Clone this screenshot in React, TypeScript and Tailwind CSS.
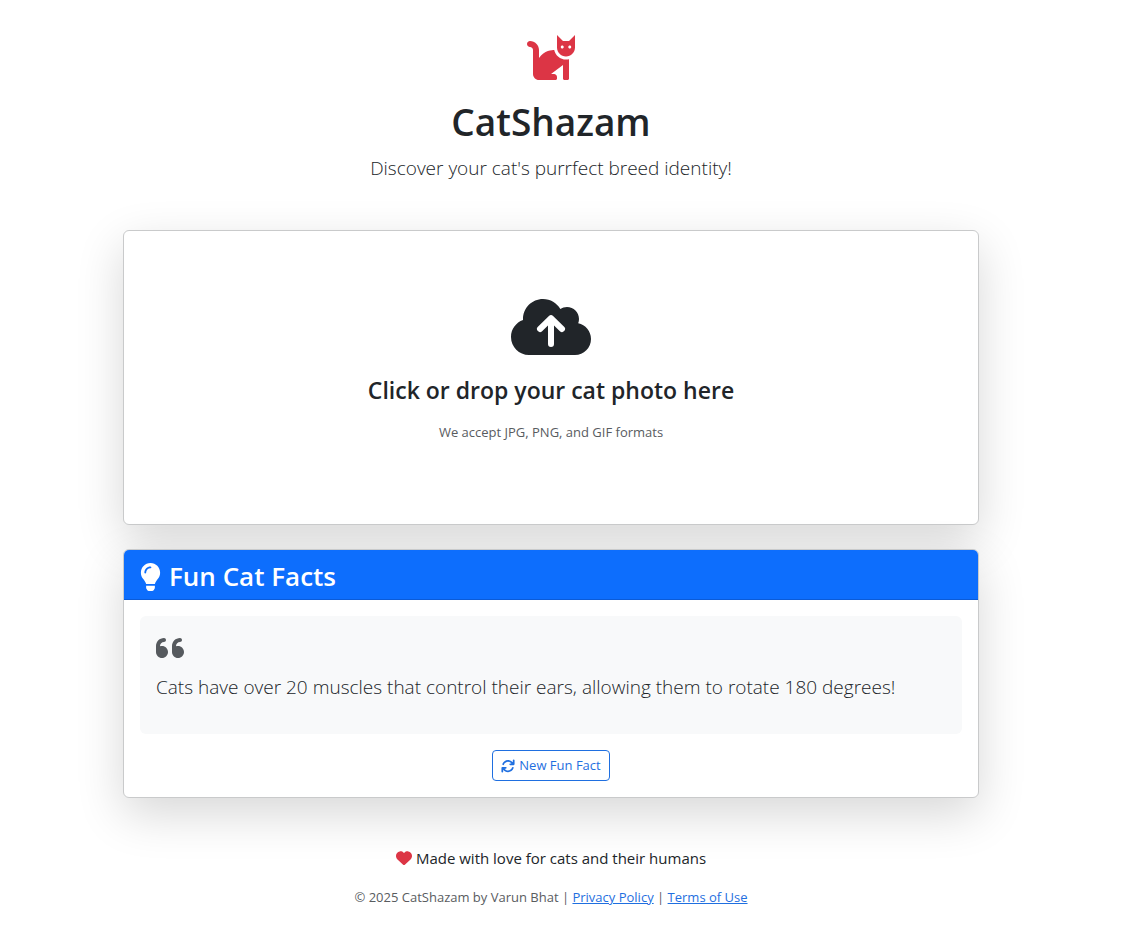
import { useRef, useState } from "react";
import { FaCat } from "react-icons/fa";
import { FaHeart } from "react-icons/fa6";

const facts = [
  "Cats have over 20 muscles that control their ears, allowing them to rotate 180 degrees!",
];

const cardClass =
  "w-full rounded-md border border-[#c9cacb] bg-white shadow-[0_16px_48px_rgba(0,0,0,0.16)]";

function CloudUploadIcon() {
  return (
    <svg viewBox="0 0 640 512" className="h-16 w-20" aria-hidden="true">
      <path
        fill="currentColor"
        d="M144 480C64.5 480 0 415.5 0 336c0-62.8 40.2-116.2 96.2-135.9C96.1 197.4 96 194.7 96 192c0-88.4 71.6-160 160-160c59.3 0 111 32.2 138.7 80.2C409.9 102 428.3 96 448 96c53 0 96 43 96 96c0 12.2-2.3 23.8-6.4 34.6C596 238.4 640 290.1 640 352c0 70.7-57.3 128-128 128H144z"
      />
      <path
        fill="none"
        stroke="#fff"
        strokeWidth="48"
        strokeLinecap="round"
        strokeLinejoin="round"
        d="M232 272l88-86 88 86M320 190v202"
      />
    </svg>
  );
}

function BulbIcon() {
  return (
    <svg viewBox="0 0 384 512" className="h-7 w-[21px]" fill="currentColor" aria-hidden="true">
      <path d="M112.1 454.3c0 6.3 1.8 12.4 5.3 17.7l17.1 25.7c5.3 7.9 17.2 14.3 26.7 14.3h61.6c9.4 0 21.4-6.4 26.6-14.3l17.1-25.7c2.9-4.4 5.3-12.4 5.3-17.7L272 416H112l.1 38.3zM191.4 0C89.4.3 16 83 16 176c0 44.4 16.4 84.8 43.6 115.8c16.5 18.8 42.3 58.2 52.2 91.4c0 .3.1.5.1.8h160.2c0-.3.1-.5.1-.8c9.9-33.2 35.7-72.6 52.2-91.4C351.6 260.8 368 220.4 368 176C368 78.6 288.9-.3 191.4 0zM192 96c-44.1 0-80 35.9-80 80c0 8.8-7.2 16-16 16s-16-7.2-16-16c0-61.8 50.3-112 112-112c8.8 0 16 7.2 16 16s-7.2 16-16 16z" />
    </svg>
  );
}

function QuoteIcon() {
  return (
    <svg
      viewBox="0 0 448 512"
      className="h-8 w-7 text-[#565a5e]"
      fill="currentColor"
      aria-hidden="true"
    >
      <path d="M96 224c-11.3 0-22 2.3-32 5.9V224c0-35.3 28.7-64 64-64c17.7 0 32-14.3 32-32s-14.3-32-32-32C57.4 96 0 153.4 0 224v96c0 53 43 96 96 96s96-43 96-96s-43-96-96-96zM352 224c-11.3 0-22 2.3-32 5.9V224c0-35.3 28.7-64 64-64c17.7 0 32-14.3 32-32s-14.3-32-32-32c-70.6 0-128 57.4-128 128v96c0 53 43 96 96 96s96-43 96-96s-43-96-96-96z" />
    </svg>
  );
}

function RefreshIcon() {
  return (
    <svg viewBox="0 0 512 512" className="size-3.5" fill="currentColor" aria-hidden="true">
      <path d="M464 16c-17.7 0-32 14.3-32 32v74.1C392.1 66.5 327.4 32 256 32C161.5 32 78.6 92.3 49.6 182.2c-5.4 16.8 3.8 34.9 20.6 40.3c16.9 5.5 34.9-3.8 40.3-20.6C130.9 138.5 189.4 96 256 96c50.5 0 96.3 24.6 124.4 64H336c-17.7 0-32 14.3-32 32s14.3 32 32 32h128c17.7 0 32-14.3 32-32V48c0-17.7-14.3-32-32-32zM441.8 289.6c-16.9-5.4-34.9 3.8-40.3 20.6C381.1 373.5 322.6 416 256 416c-50.5 0-96.3-24.6-124.4-64H176c17.7 0 32-14.3 32-32s-14.3-32-32-32H48c-17.7 0-32 14.3-32 32v144c0 17.7 14.3 32 32 32s32-14.3 32-32v-74.1C119.9 445.5 184.6 480 256 480c94.5 0 177.4-60.3 206.4-150.2c5.5-16.8-3.8-35.7-20.6-40.2z" />
    </svg>
  );
}

function Header() {
  return (
    <header className="flex flex-col items-center text-center">
      <FaCat className="size-12 text-[#dc3545]" aria-hidden="true" />
      <h1 className="mt-[18px] text-[37px] leading-[48px] font-semibold">CatShazam</h1>
      <p className="mt-2 text-[19px] leading-7 font-light">
        Discover your cat's purrfect breed identity!
      </p>
    </header>
  );
}

function UploadCard() {
  const input = useRef<HTMLInputElement>(null);
  return (
    <section className={cardClass}>
      <button
        type="button"
        onClick={() => input.current?.click()}
        className="flex w-full cursor-pointer flex-col items-center px-4 pt-16 pb-20"
      >
        <CloudUploadIcon />
        <span className="mt-4 text-[23px] leading-[30px] font-semibold">
          Click or drop your cat photo here
        </span>
        <span className="mt-4 text-[13px] leading-[23px] text-[#595c5f]">
          We accept JPG, PNG, and GIF formats
        </span>
      </button>
      <input
        ref={input}
        type="file"
        accept="image/*"
        aria-label="Cat photo"
        className="hidden"
      />
    </section>
  );
}

function FactsCard() {
  const [index, setIndex] = useState(0);
  return (
    <section className={cardClass}>
      <h2 className="flex items-center gap-2 rounded-t-[5px] border-b border-[#0b5bd7] bg-[#0d6efd] px-4 pt-2.5 pb-1.5 text-[26px] leading-[33px] font-semibold text-white">
        <BulbIcon />
        Fun Cat Facts
      </h2>
      <div className="flex flex-col items-center gap-4 p-4">
        <blockquote className="w-full rounded-md bg-[#f8f9fa] px-4 pt-4 pb-8">
          <QuoteIcon />
          <p className="mt-2 text-[19px] leading-[30px] font-light">{facts[index]}</p>
        </blockquote>
        <button
          type="button"
          onClick={() => setIndex((index + 1) % facts.length)}
          className="flex cursor-pointer items-center gap-1 rounded border border-[#1f6fe0] px-2 py-1 text-[13px] leading-[21px] text-[#1f6fe0]"
        >
          <RefreshIcon />
          New Fun Fact
        </button>
      </div>
    </section>
  );
}

function Footer() {
  return (
    <footer className="flex flex-col items-center gap-4 text-center">
      <p className="flex items-center gap-1 text-[15px] leading-6">
        <FaHeart className="size-4 text-[#dc3545]" aria-hidden="true" />
        Made with love for cats and their humans
      </p>
      <p className="text-[13px] leading-[23px] text-[#595c5f]">
        © 2025 CatShazam by Varun Bhat |{" "}
        <a href="#privacy" className="text-[#1f6fe0] underline">
          Privacy Policy
        </a>{" "}
        |{" "}
        <a href="#terms" className="text-[#1f6fe0] underline">
          Terms of Use
        </a>
      </p>
    </footer>
  );
}

export default function App() {
  return (
    <div className="min-h-screen bg-white pr-[39px] font-['Open_Sans','Noto_Sans',sans-serif] text-[#212529]">
      <main className="mx-auto flex max-w-[856px] flex-col pt-8 pb-8">
        <Header />
        <div className="mt-12 mb-12 flex flex-col gap-6">
          <UploadCard />
          <FactsCard />
        </div>
        <Footer />
      </main>
    </div>
  );
}
